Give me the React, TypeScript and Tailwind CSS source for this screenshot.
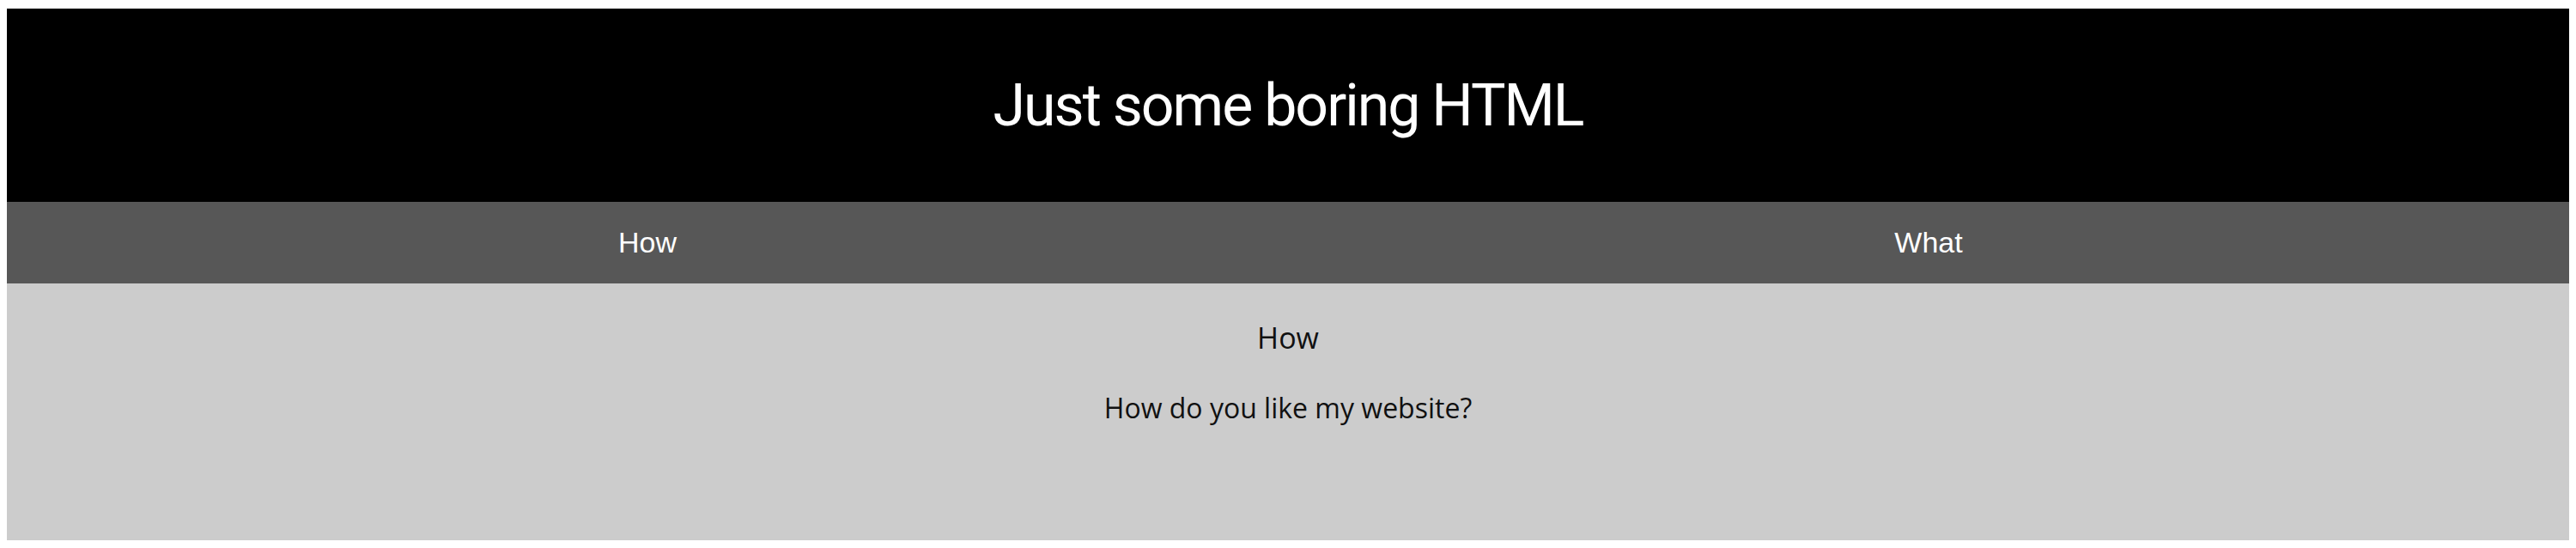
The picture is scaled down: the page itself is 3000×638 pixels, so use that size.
export default function App() {
  return (
    <div className="h-[638px] w-full bg-white px-[8px] pt-[10px] pb-[9px]">
      <div className="flex h-full flex-col">
        <header className="flex h-[225px] items-center justify-center bg-black">
          <h1 className="font-['Roboto',sans-serif] text-[68px] font-normal tracking-[-2px] text-white">Just some boring HTML</h1>
        </header>
        <nav className="grid h-[95px] grid-cols-2 bg-[#575757] font-['Liberation_Sans',Arial,sans-serif] text-[34px] text-white">
          <a className="flex items-center justify-center">How</a>
          <a className="flex items-center justify-center">What</a>
        </nav>
        <main className="flex-1 bg-[#cccccc] pt-[43px] text-center font-['Open_Sans',sans-serif] text-[#111]">
          <h2 className="text-[34px] leading-[40px]">How</h2>
          <p className="mt-[42px] text-[32px] leading-[40px]">How do you like my website?</p>
        </main>
      </div>
    </div>
  );
}
